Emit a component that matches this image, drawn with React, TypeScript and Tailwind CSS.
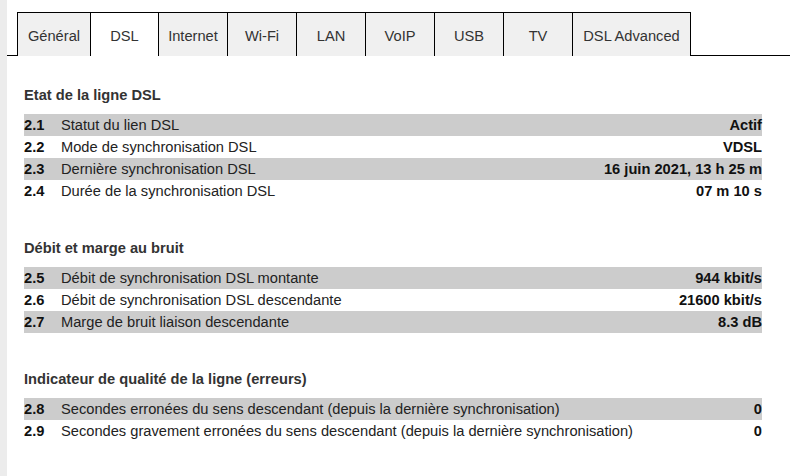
import React from "react";

type Row = { num: string; label: string; value: string };
type Section = { title: string; rows: Row[] };

const tabs = [
  { label: "Général", w: "w-[73px]" },
  { label: "DSL", w: "w-[68px]", active: true },
  { label: "Internet", w: "w-[69px]" },
  { label: "Wi-Fi", w: "w-[69px]" },
  { label: "LAN", w: "w-[69px]" },
  { label: "VoIP", w: "w-[69px]" },
  { label: "USB", w: "w-[69px]" },
  { label: "TV", w: "w-[69px]" },
  { label: "DSL Advanced", w: "w-[119px]", last: true },
];

const sections: Section[] = [
  {
    title: "Etat de la ligne DSL",
    rows: [
      { num: "2.1", label: "Statut du lien DSL", value: "Actif" },
      { num: "2.2", label: "Mode de synchronisation DSL", value: "VDSL" },
      { num: "2.3", label: "Dernière synchronisation DSL", value: "16 juin 2021, 13 h 25 m" },
      { num: "2.4", label: "Durée de la synchronisation DSL", value: "07 m 10 s" },
    ],
  },
  {
    title: "Débit et marge au bruit",
    rows: [
      { num: "2.5", label: "Débit de synchronisation DSL montante", value: "944 kbit/s" },
      { num: "2.6", label: "Débit de synchronisation DSL descendante", value: "21600 kbit/s" },
      { num: "2.7", label: "Marge de bruit liaison descendante", value: "8.3 dB" },
    ],
  },
  {
    title: "Indicateur de qualité de la ligne (erreurs)",
    rows: [
      { num: "2.8", label: "Secondes erronées du sens descendant (depuis la dernière synchronisation)", value: "0" },
      { num: "2.9", label: "Secondes gravement erronées du sens descendant (depuis la dernière synchronisation)", value: "0" },
    ],
  },
];

export default function App() {
  return (
    <div className="flex h-[476px] w-[790px] overflow-hidden bg-white font-['Liberation_Sans',Arial,sans-serif]">
      <div className="w-[7px] shrink-0 bg-[#ececec]" />
      <div className="flex flex-1 flex-col">
        {/* tabs */}
        <div className="flex items-end pt-[12px]">
          <div className="w-[10px] border-b border-black" />
          {tabs.map((t) => (
            <div
              key={t.label}
              className={`${t.w} flex h-[44px] items-center justify-center border-t border-l border-black pt-[2px] text-[14.67px] text-[#333] ${
                t.active ? "bg-white" : "bg-[#f0f0f0]"
              } ${t.last ? "border-r" : ""}`}
            >
              {t.label}
            </div>
          ))}
          <div className="flex-1 border-b border-black" />
        </div>

        {/* content */}
        <div className="flex flex-col pl-[17px] pr-[28px] text-[14.67px]">
          {sections.map((s, i) => (
            <div key={s.title} className={i === 0 ? "mt-[29px]" : "mt-[36px]"}>
              <h2 className="h-[20px] leading-[20px] font-bold text-[#333]">{s.title}</h2>
              <div className="mt-[9px] flex flex-col">
                {s.rows.map((r, j) => (
                  <div
                    key={r.num}
                    className={`flex h-[22px] items-center leading-[22px] ${j % 2 === 0 ? "bg-[#cccccc]" : ""}`}
                  >
                    <span className="w-[37px] shrink-0 font-bold text-[#111]">{r.num}</span>
                    <span className="flex-1 text-[#222]">{r.label}</span>
                    <span className="font-bold text-[#111]">{r.value}</span>
                  </div>
                ))}
              </div>
            </div>
          ))}
        </div>
      </div>
    </div>
  );
}
